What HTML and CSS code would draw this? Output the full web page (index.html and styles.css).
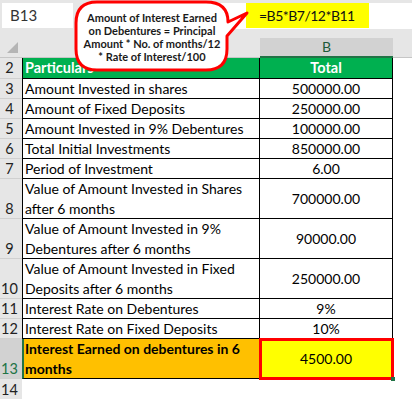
FILE: index.html
```html
<!DOCTYPE html>
<html>
<head>
<meta charset="utf-8">
<link rel="stylesheet" href="styles.css">
</head>
<body>
<div class="app">
  <div class="fbar">
    <div class="namebox">B13</div>
    <div class="fgap"></div>
    <div class="formula"><span class="fyellow">=B5*B7/12*B11</span></div>
  </div>
  <div class="sheet">
    <div class="corner"><svg width="22" height="19" viewBox="0 0 22 19"><polygon points="7,15 18,15 18,4" fill="#b5b5b5"/></svg></div>
    <div class="ch"></div>
    <div class="ch sel">B</div>
    <div class="ch"></div>

    <div class="rh r2">2</div><div class="a g r2">Particulars</div><div class="b g r2">Total</div><div class="x"></div>
    <div class="rh">3</div><div class="a">Amount Invested in shares</div><div class="b">500000.00</div><div class="x"></div>
    <div class="rh">4</div><div class="a">Amount of Fixed Deposits</div><div class="b">250000.00</div><div class="x"></div>
    <div class="rh">5</div><div class="a">Amount Invested in 9% Debentures</div><div class="b">100000.00</div><div class="x"></div>
    <div class="rh">6</div><div class="a">Total Initial Investments</div><div class="b">850000.00</div><div class="x"></div>
    <div class="rh">7</div><div class="a">Period of Investment</div><div class="b">6.00</div><div class="x"></div>
    <div class="rh tall">8</div><div class="a tall">Value of Amount Invested in Shares<br>after 6 months</div><div class="b">700000.00</div><div class="x"></div>
    <div class="rh tall">9</div><div class="a tall">Value of Amount Invested in 9%<br>Debentures after 6 months</div><div class="b">90000.00</div><div class="x"></div>
    <div class="rh tall">10</div><div class="a tall">Value of Amount Invested in Fixed<br>Deposits after 6 months</div><div class="b">250000.00</div><div class="x"></div>
    <div class="rh">11</div><div class="a">Interest Rate on Debentures</div><div class="b">9%</div><div class="x"></div>
    <div class="rh">12</div><div class="a">Interest Rate on Fixed Deposits</div><div class="b">10%</div><div class="x"></div>
    <div class="rh tall selrow">13</div><div class="a tall o">Interest Earned on debentures in 6<br>months</div><div class="b y">4500.00</div><div class="x"></div>
    <div class="rh last">14</div><div class="e"></div><div class="e"></div><div class="e"></div>
  </div>

  <div class="callout">
    <svg class="bubble" width="260" height="80" viewBox="0 0 260 80">
      <path d="M97,2 H206 Q228,2 228,22 L247,13 L227,36 V49 Q227,70 206,70 H97 Q76,70 76,49 V23 Q76,2 97,2 Z" fill="#ffffff" stroke="#ff0000" stroke-width="3" stroke-linejoin="round"/>
    </svg>
    <div class="ctext">Amount of Interest Earned<br>on Debentures = Principal<br>Amount * No. of months/12<br>* Rate of Interest/100</div>
  </div>
</div>
</body>
</html>
```

FILE: styles.css
```css
html, body {
  margin: 0;
  padding: 0;
}
body {
  width: 412px;
  height: 399px;
  overflow: hidden;
  background: #ffffff;
  font-family: Lato, "Open Sans", sans-serif;
  color: #000;
}
.app {
  position: relative;
  width: 412px;
  height: 399px;
  background: #ffffff;
}
.fbar {
  display: flex;
  align-items: flex-start;
  height: 38px;
  box-sizing: border-box;
  padding: 3px 0 0 2px;
  background: #e6e6e6;
}
.namebox {
  width: 71px;
  height: 25px;
  background: #fff;
  box-sizing: border-box;
  padding-left: 8px;
  font-size: 15px;
  line-height: 25px;
  color: #333;
}
.fgap {
  width: 117px;
}
.formula {
  flex: 1;
  height: 26px;
  background: #fff;
  padding-left: 56px;
}
.fyellow {
  display: block;
  width: 123px;
  height: 25px;
  box-sizing: border-box;
  padding-left: 13px;
  background: #ffff00;
  font-size: 14px;
  letter-spacing: -0.5px;
  line-height: 25px;
  color: #111;
}
.sheet {
  display: grid;
  grid-template-columns: 22px 238px 133px 19px;
  font-size: 14px;
}
.corner, .ch {
  height: 20px;
  box-sizing: border-box;
  background: #e6e6e6;
  border-bottom: 1px solid #c6c6c6;
}
.corner svg {
  display: block;
}
.ch.sel {
  background: #d2d2d2;
  border-bottom: 2px solid #217346;
  color: #1d5a3a;
  text-align: center;
  font-size: 14px;
  line-height: 18px;
}
.rh {
  background: #e6e6e6;
  border-bottom: 1px solid #d0d0d0;
  display: flex;
  align-items: flex-end;
  justify-content: center;
  padding-right: 3px;
  line-height: 19px;
  font-size: 14.5px;
  color: #222;
}
.rh.r2 {
  line-height: 20px;
}
.rh.tall {
  line-height: 19.5px;
}
.rh.selrow {
  background: #d2d2d2;
  color: #217346;
}
.rh.last {
  border-bottom: none;
  height: 20px;
}
.a {
  border-left: 1px solid #000;
  border-right: 1px solid #000;
  border-bottom: 1px solid #000;
  padding-left: 2px;
  line-height: 19px;
  white-space: nowrap;
  overflow: hidden;
}
.a.tall {
  line-height: 19.5px;
}
.a.r2, .b.r2 {
  line-height: 20px;
}
.b {
  border-right: 1px solid #000;
  border-bottom: 1px solid #000;
  display: flex;
  align-items: center;
  justify-content: center;
  line-height: 19px;
}
.g {
  background: #00b050;
  color: #fff;
  font-weight: bold;
  font-size: 14.5px;
}
.a.o {
  background: #ffc000;
  font-weight: bold;
  border-left: 2px solid #217346;
  padding-left: 1px;
}
.b.y {
  background: #ffff00;
  position: relative;
  outline: 3px solid #ff0000;
  outline-offset: -2px;
}
.b.y::after {
  content: "";
  position: absolute;
  right: -3px;
  bottom: -3px;
  width: 4px;
  height: 4px;
  background: #217346;
}
.x, .e {
  background: #fff;
}
.callout {
  position: absolute;
  left: 0;
  top: 0;
  width: 260px;
  height: 80px;
}
.bubble {
  position: absolute;
  left: 0;
  top: 0;
}
.ctext {
  position: absolute;
  left: 77px;
  top: 11px;
  width: 150px;
  text-align: center;
  font-family: Lato, "Open Sans", sans-serif;
  font-weight: bold;
  font-size: 11px;
  line-height: 13px;
  color: #1a1a1a;
  white-space: nowrap;
}
```
